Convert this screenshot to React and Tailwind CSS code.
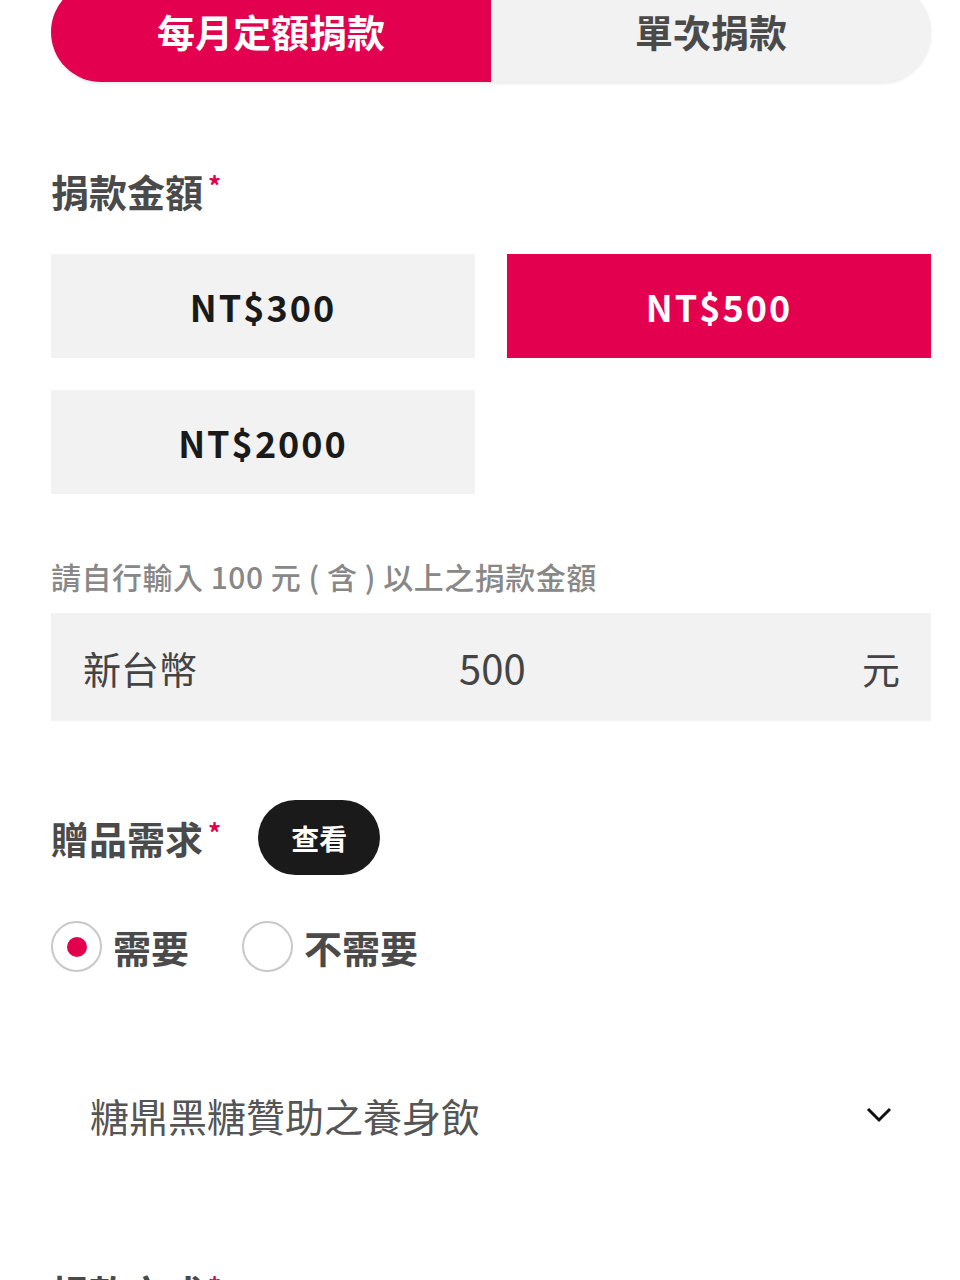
import React, { useState } from "react";

const FONT = { fontFamily: '"Noto Sans CJK TC", "Noto Sans", sans-serif' };

const AMOUNTS = [300, 500, 2000];

const Label = ({ children }) => (
  <div className="flex items-start text-[38px] font-bold leading-[50px] text-[#4a4a4a]">
    {children}
    <span className="ml-[5px] mt-[4px] text-[26px] leading-[30px] text-[#e2004f]">*</span>
  </div>
);

export default function App() {
  const [plan, setPlan] = useState("monthly");
  const [amount, setAmount] = useState(500);
  const [gift, setGift] = useState(true);

  return (
    <div className="min-h-screen overflow-hidden bg-white" style={FONT}>
      <div className="ml-[51px] w-[880px]">
        <div className="-mt-[18px] flex h-[100px] overflow-hidden rounded-[50px] bg-[#f2f2f2] shadow-[0_2px_3px_rgba(0,0,0,0.08)]">
          <button
            type="button"
            onClick={() => setPlan("monthly")}
            className={`flex-1 pb-[4px] text-[38px] font-bold ${
              plan === "monthly" ? "bg-[#e2004f] text-white" : "text-[#4a4a4a]"
            }`}
          >
            每月定額捐款
          </button>
          <button
            type="button"
            onClick={() => setPlan("single")}
            className={`flex-1 pb-[4px] text-[38px] font-bold ${
              plan === "single" ? "bg-[#e2004f] text-white" : "text-[#4a4a4a]"
            }`}
          >
            單次捐款
          </button>
        </div>

        <div className="mt-[84px]">
          <Label>捐款金額</Label>
        </div>

        <div className="mt-[38px] grid grid-cols-2 gap-x-[32px] gap-y-[32px]">
          {AMOUNTS.map((a) => (
            <button
              key={a}
              type="button"
              onClick={() => setAmount(a)}
              className={`h-[104px] text-[36px] font-bold tracking-[2px] ${
                amount === a ? "bg-[#e2004f] text-white" : "bg-[#f2f2f2] text-[#1a1a1a]"
              }`}
            >
              NT${a}
            </button>
          ))}
        </div>

        <p className="mt-[62px] text-[30px] font-medium leading-[40px] tracking-[0.5px] text-[#888888]">
          請自行輸入 100 元 ( 含 ) 以上之捐款金額
        </p>

        <div className="mt-[17px] flex h-[108px] items-center bg-[#f2f2f2] pl-[32px] pr-[31px] text-[38px] text-[#444444]">
          <span className="w-[200px]">新台幣</span>
          <span className="flex-1 pl-[176px] text-[40px]">{amount}</span>
          <span>元</span>
        </div>

        <div className="mt-[79px] flex items-center">
          <Label>贈品需求</Label>
          <button
            type="button"
            className="ml-[37px] h-[75px] w-[122px] rounded-full bg-[#1a1a1a] text-[28px] font-bold text-white"
          >
            查看
          </button>
        </div>

        <div className="mt-[43px] flex items-center">
          <button type="button" onClick={() => setGift(true)} className="flex items-center">
            <span className="flex h-[51px] w-[51px] items-center justify-center rounded-full border-2 border-[#c8c8c8] bg-white">
              {gift && <span className="h-[20px] w-[20px] rounded-full bg-[#e2004f]" />}
            </span>
            <span className="ml-[11px] text-[38px] font-bold text-[#4a4a4a]">需要</span>
          </button>
          <button type="button" onClick={() => setGift(false)} className="ml-[53px] flex items-center">
            <span className="flex h-[51px] w-[51px] items-center justify-center rounded-full border-2 border-[#c8c8c8] bg-white">
              {!gift && <span className="h-[20px] w-[20px] rounded-full bg-[#e2004f]" />}
            </span>
            <span className="ml-[11px] text-[38px] font-bold text-[#4a4a4a]">不需要</span>
          </button>
        </div>

        <div className="mt-[90px] flex items-center justify-between py-[23px] pl-[39px] pr-[39px]">
          <span className="text-[39px] leading-[54px] text-[#555555]">糖鼎黑糖贊助之養身飲</span>
          <svg width="26" height="16" viewBox="0 0 26 16" fill="none">
            <path d="M2 2l11 11L24 2" stroke="#111" strokeWidth="3" />
          </svg>
        </div>

        <div className="mt-[102px]">
          <Label>捐款方式</Label>
        </div>
      </div>
    </div>
  );
}
